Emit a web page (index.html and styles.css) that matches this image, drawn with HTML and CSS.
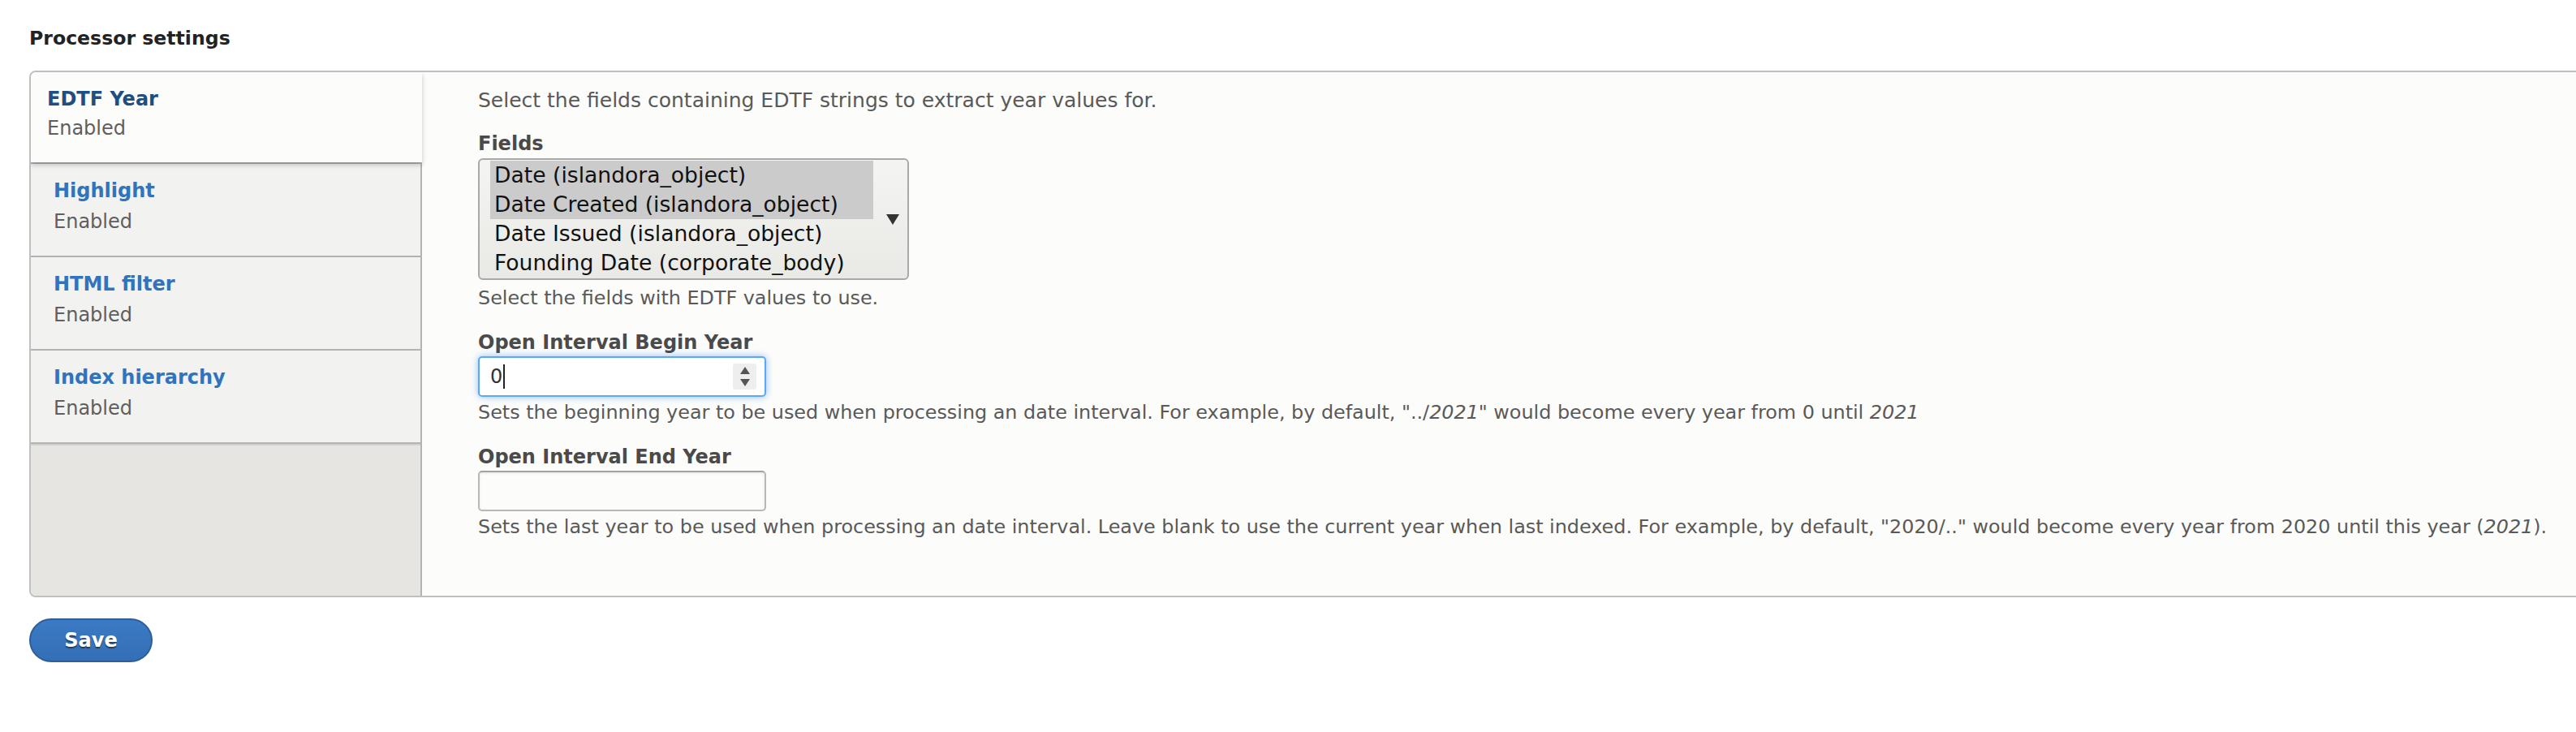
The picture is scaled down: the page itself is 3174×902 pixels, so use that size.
FILE: index.html
```html
<!DOCTYPE html>
<html lang="en">
<head>
<meta charset="utf-8">
<title>Processor settings</title>
<link rel="stylesheet" href="styles.css">
</head>
<body>
<div class="page">
  <h2 class="section-title">Processor settings</h2>
  <div class="vtabs">
    <ul class="vtabs-menu">
      <li class="vtab is-selected">
        <a class="vtab-title" href="#">EDTF Year</a>
        <span class="vtab-summary">Enabled</span>
      </li>
      <li class="vtab">
        <a class="vtab-title" href="#">Highlight</a>
        <span class="vtab-summary">Enabled</span>
      </li>
      <li class="vtab">
        <a class="vtab-title" href="#">HTML filter</a>
        <span class="vtab-summary">Enabled</span>
      </li>
      <li class="vtab is-last">
        <a class="vtab-title" href="#">Index hierarchy</a>
        <span class="vtab-summary">Enabled</span>
      </li>
    </ul>
    <div class="vtabs-pane">
      <div class="description intro">Select the fields containing EDTF strings to extract year values for.</div>

      <div class="form-item first">
        <label class="form-label">Fields</label>
        <div class="listbox" role="listbox">
          <div class="options">
            <div class="option selected">Date (islandora_object)</div>
            <div class="option selected">Date Created (islandora_object)</div>
            <div class="option">Date Issued (islandora_object)</div>
            <div class="option">Founding Date (corporate_body)</div>
          </div>
          <svg class="list-arrow" width="16" height="13" viewBox="0 0 16 13"><path d="M0 0 H16 L8 13 Z" fill="#333"/></svg>
        </div>
        <div class="description after-select">Select the fields with EDTF values to use.</div>
      </div>

      <div class="form-item">
        <label class="form-label">Open Interval Begin Year</label>
        <div class="num-input">
          <span class="num-value">0</span><span class="caret"></span>
          <span class="spinner">
            <svg width="14" height="28" viewBox="0 0 14 28"><path d="M7 2 L13 11 H1 Z" fill="#555"/><path d="M1 17 H13 L7 26 Z" fill="#555"/></svg>
          </span>
        </div>
        <div class="description">Sets the beginning year to be used when processing an date interval. For example, by default, "../<em>2021</em>" would become every year from 0 until <em>2021</em></div>
      </div>

      <div class="form-item">
        <label class="form-label">Open Interval End Year</label>
        <input class="text-input" type="text" value="">
        <div class="description">Sets the last year to be used when processing an date interval. Leave blank to use the current year when last indexed. For example, by default, "2020/.." would become every year from 2020 until this year (<em>2021</em>).</div>
      </div>
    </div>
  </div>
  <div class="actions">
    <button class="btn-save" type="button">Save</button>
  </div>
</div>
</body>
</html>
```

FILE: styles.css
```css
html, body {
  margin: 0;
  padding: 0;
  background: #ffffff;
  overflow: hidden;
}
body {
  font-family: "DejaVu Sans", "Liberation Sans", sans-serif;
  color: #333;
}
.page {
  padding-left: 36px;
  width: 3300px;
}
.section-title {
  margin: 32px 0 0;
  font-size: 23.6px;
  line-height: 30px;
  font-weight: bold;
  color: #222;
}
.vtabs {
  margin-top: 25px;
  display: flex;
  width: 3200px;
  border: 2px solid #bfbfbf;
  border-radius: 8px;
  background: #fcfcfa;
  overflow: hidden;
}
.vtabs-menu {
  list-style: none;
  margin: 0;
  padding: 0;
  width: 480px;
  flex: none;
  background: #e6e5e1;
  border-right: 2px solid #b3b3b3;
}
.vtab {
  display: flex;
  flex-direction: column;
  background: #f2f2f0;
  border-top: 2px solid #b3b3b3;
  padding: 14px 0 23px 28px;
  height: 115px;
  box-sizing: border-box;
}
.vtab .vtab-title,
.vtab .vtab-summary {
  line-height: 38px;
  font-size: 24px;
}
.vtab-title {
  font-weight: bold;
  color: #2f74bd;
  text-decoration: none;
}
.vtab-summary {
  color: #5f5f5f;
}
.vtab.is-selected {
  position: relative;
  z-index: 1;
  border-top: none;
  height: 111px;
  padding: 15px 0 24px 20px;
  margin-right: -2px;
  background: #fcfcfa;
  box-shadow: 0 3px 6px rgba(0, 0, 0, 0.22);
}
.vtab.is-selected .vtab-title,
.vtab.is-selected .vtab-summary {
  line-height: 36px;
}
.vtab.is-selected .vtab-title {
  color: #1d4f80;
}
.vtab.is-last {
  border-bottom: 2px solid #b3b3b3;
  box-shadow: 0 2px 0 #d2d2cf;
  height: 117px;
}
.vtabs-pane {
  flex: 1;
  min-width: 0;
  padding: 20px 0 70px 69px;
}
.description {
  font-size: 23.85px;
  line-height: 30px;
  color: #595959;
  white-space: nowrap;
}
.description.intro {
  font-size: 25px;
}
.form-item {
  margin-top: 25px;
}
.form-item.first {
  margin-top: 23px;
}
.form-label {
  display: block;
  font-size: 24px;
  line-height: 30px;
  font-weight: bold;
  color: #4a4a4a;
  margin-bottom: 2px;
}
.form-item.first .form-label {
  margin-bottom: 3px;
}
.listbox {
  width: 531px;
  height: 150px;
  box-sizing: border-box;
  border: 2px solid #a9a9a9;
  border-radius: 6px;
  background: linear-gradient(#f4f4f2, #e9e9e6);
  padding: 1px 0 0 13px;
  display: flex;
  align-items: center;
}
.options {
  width: 472px;
  align-self: flex-start;
}
.option {
  font-size: 26.6px;
  line-height: 36px;
  padding-left: 5px;
  color: #111;
  white-space: nowrap;
}
.option.selected {
  background: #cbcbcb;
}
.list-arrow {
  margin-left: 16px;
  margin-top: 0;
}
.description.after-select {
  margin-top: 7px;
}
.num-input {
  width: 355px;
  height: 50px;
  box-sizing: border-box;
  border: 2px solid #5aa8f6;
  border-radius: 5px;
  box-shadow: 0 0 8px rgba(80, 160, 250, 0.65);
  background: #fff;
  display: flex;
  align-items: center;
  padding: 0 10px 0 13px;
}
.num-value {
  font-size: 24px;
  color: #333;
}
.caret {
  width: 2px;
  height: 30px;
  background: #222;
  margin-left: 1px;
}
.spinner {
  margin-left: auto;
  width: 29px;
  height: 32px;
  background: #eeeeee;
  border-radius: 3px;
  display: flex;
  align-items: center;
  justify-content: center;
}
.text-input {
  display: block;
  width: 355px;
  height: 50px;
  box-sizing: border-box;
  margin: 0;
  border: 2px solid #b8b8b8;
  border-top-color: #a3a3a3;
  border-radius: 5px;
  background: #fcfcfa;
  box-shadow: inset 0 1px 3px rgba(0, 0, 0, 0.1);
  font: inherit;
  outline: none;
}
.num-input + .description,
.text-input + .description {
  margin-top: 4px;
}
.actions {
  margin-top: 26px;
}
.btn-save {
  width: 152px;
  height: 54px;
  border: 2px solid #2d5e98;
  border-radius: 27px;
  background: linear-gradient(#3b7ac4, #336fb6);
  color: #fff;
  font-family: "DejaVu Sans", sans-serif;
  font-size: 24px;
  font-weight: bold;
  text-shadow: 0 2px 1px rgba(0, 0, 0, 0.45);
  padding: 0;
  cursor: pointer;
}
```
